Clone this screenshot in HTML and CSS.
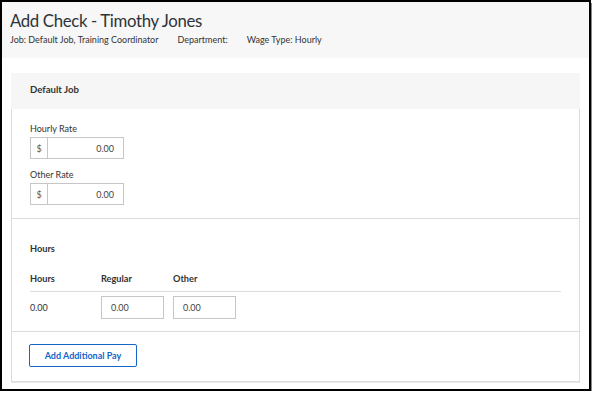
FILE: index.html
```html
<!DOCTYPE html>
<html>
<head>
<meta charset="utf-8">
<link rel="stylesheet" href="styles.css">
</head>
<body>
<div class="frame">
  <header class="page-head">
    <h1 class="title">Add Check - Timothy Jones</h1>
    <div class="meta">
      <span>Job: Default Job, Training Coordinator</span>
      <span>Department:</span>
      <span>Wage Type: Hourly</span>
    </div>
  </header>
  <main class="content">
    <section class="card">
      <div class="card-head">Default Job</div>
      <div class="rates">
        <div class="field">
          <label class="label">Hourly Rate</label>
          <div class="money"><span class="addon">$</span><span class="val">0.00</span></div>
        </div>
        <div class="field">
          <label class="label">Other Rate</label>
          <div class="money"><span class="addon">$</span><span class="val">0.00</span></div>
        </div>
      </div>
      <div class="hours">
        <div class="sub-title">Hours</div>
        <div class="thead">
          <span class="c1">Hours</span><span class="c2">Regular</span><span class="c3">Other</span>
        </div>
        <div class="trow">
          <span class="c1">0.00</span>
          <span class="c2"><span class="box">0.00</span></span>
          <span class="c3"><span class="box">0.00</span></span>
        </div>
      </div>
      <div class="actions">
        <button class="btn">Add Additional Pay</button>
      </div>
    </section>
  </main>
</div>
</body>
</html>
```
FILE: styles.css
```css
* { box-sizing: border-box; }
html, body { margin: 0; padding: 0; background: #ffffff; }
body { font-family: Lato, "Liberation Sans", sans-serif; color: #333; }
.frame {
  width: 591px;
  height: 391px;
  border: 2px solid #000;
  box-shadow: 1px 3px 0 #8a8a8a;
  background: #fff;
  overflow: hidden;
}
.page-head {
  background: #f7f7f7;
  height: 56px;
  padding: 8px 8px 0;
}
.title {
  margin: 0;
  font-weight: 400;
  font-size: 16.8px;
  letter-spacing: -0.35px;
  line-height: 21px;
  color: #2e3338;
}
.meta {
  margin-top: 3px;
  display: flex;
  gap: 19px;
  font-size: 9px;
  color: #333;
}
.content { padding: 15px 9px 0 9px; }
.card {
  border: 1px solid #dcdcdc;
  border-top: none;
  height: 309px;
  box-shadow: 0 1px 0 #e8e8e8;
}
.card-head {
  background: #f6f6f6;
  height: 36px;
  display: flex;
  align-items: center;
  padding-bottom: 3px;
  font-size: 9.6px;
  font-weight: 700;
  margin: 0 -1px;
  padding-left: 19px;
}
.rates {
  padding: 14px 18px 13px;
  border-bottom: 1px solid #dcdcdc;
  display: flex;
  flex-direction: column;
  gap: 10px;
}
.label { display: block; font-size: 9px; color: #333; margin-bottom: 3px; line-height: 11px; }
.money {
  width: 94px;
  height: 22px;
  border: 1px solid #c6c6c6;
  display: flex;
  font-size: 9px;
}
.addon {
  width: 17px;
  border-right: 1px solid #c6c6c6;
  display: flex;
  align-items: center;
  justify-content: center;
  color: #555;
}
.val { flex: 1; display: flex; align-items: center; justify-content: flex-end; padding-right: 9px; color: #444; }
.hours {
  padding: 24px 18px 12px;
  border-bottom: 1px solid #dcdcdc;
}
.sub-title { font-size: 9.2px; font-weight: 700; }
.thead {
  display: flex;
  margin-top: 19px;
  padding-bottom: 7px;
  border-bottom: 1px solid #dcdcdc;
  font-size: 9.2px;
  font-weight: 700;
}
.c1 { width: 71px; }
.c2 { width: 72px; }
.c3 { width: 72px; }
.trow {
  display: flex;
  align-items: center;
  padding-top: 4px;
  font-size: 9px;
}
.box {
  display: flex;
  align-items: center;
  width: 63px;
  height: 23px;
  border: 1px solid #c6c6c6;
  padding-left: 9px;
  color: #444;
}
.actions { padding: 11px 17px; }
.btn {
  width: 108px;
  height: 23px;
  border: 1px solid #1565c8;
  border-radius: 2px;
  background: #fff;
  color: #1565c8;
  font-family: Lato, "Liberation Sans", sans-serif;
  font-weight: 700;
  font-size: 9px;
  padding: 0;
}
```
